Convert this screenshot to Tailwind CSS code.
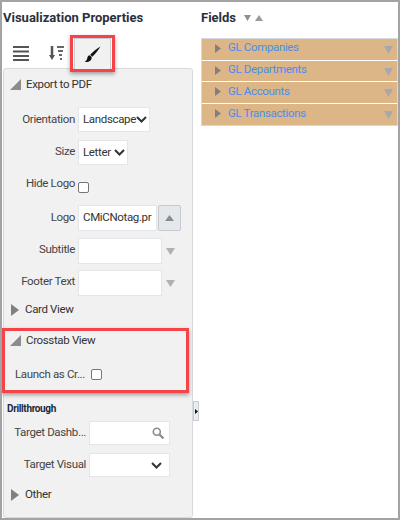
<!DOCTYPE html>
<html>
<head>
<meta charset="utf-8">
<script src="https://cdn.jsdelivr.net/npm/@tailwindcss/browser@4"></script>
</head>
<body class="bg-white">
<div class="relative w-[400px] h-[520px] overflow-hidden bg-white border-2 border-[#a3a3a3] text-[#333] text-[11.5px] font-['Roboto','Open_Sans',sans-serif] tracking-[-0.35px]">
  <div class="flex h-full">
    <!-- left pane -->
    <div class="w-[190px] shrink-0 ml-[1px]">
      <div class="h-[30px] pt-[7px] text-[13px] font-bold leading-[17px] tracking-[0px] text-[#2b3040] whitespace-nowrap">Visualization Properties</div>
      <div class="flex items-end h-[36px] pl-[5px]">
        <div class="w-[26px] h-[28px] flex items-center justify-center mb-[1px]">
          <svg width="16" height="15" viewBox="0 0 16 15"><path d="M0 1h16M0 5.500h16M0 10h16M0 14h16" stroke="#555" stroke-width="2"/></svg>
        </div>
        <div class="w-[22px] h-[28px] ml-[11px] flex items-center justify-center mb-[1px]">
          <svg width="15" height="15" viewBox="0 0 15 15"><path d="M3 0v10" stroke="#555" stroke-width="2.500"/><path d="M0 9h6l-3 5z" fill="#555"/><path d="M8 1h7M9 5h5M10 9h3M11 13h2" stroke="#666" stroke-width="2"/></svg>
        </div>
        <div class="w-[37px] h-[31px] ml-[7px] -mb-[1px] bg-[#f1f1f1] border border-b-0 border-[#c8ccd0] flex items-center justify-center relative z-10">
          <svg width="17" height="17" viewBox="0 0 16 16"><path d="M15.500 .5C12 2.500 8.500 5.500 5.800 8.300l2 1.900C10.500 7.500 13.500 4 15.500 .5z" fill="#111"/><path d="M5.300 8.800C3.300 9.300 3.300 11 2.800 12.500 2.500 13.500 1.500 14.500 .5 15c2.500.5 5-.3 6.200-2 .6-1 .7-2 .4-3z" fill="#111"/></svg>
        </div>
      </div>
      <div class="h-[450px] bg-[#f1f1f1] border border-[#d6dade] rounded-[3px] relative">
        <div class="flex items-center h-[17px] mt-[7px] pl-[6px]">
          <svg width="11" height="11" viewBox="0 0 11 11" class="mr-[5px]"><path d="M11 0v11H0z" fill="#8c8c8c"/></svg>
          <span>Export to PDF</span>
        </div>
        <div class="flex items-center mt-[14px] h-[25px]">
          <label class="w-[74px] text-right pr-[3px] text-[#444]">Orientation</label>
          <div class="w-[72px] h-[25px] bg-white border border-[#e2e6ea] flex items-center justify-between pl-[4px] pr-[2px]"><span>Landscape</span>
            <svg width="11" height="7" viewBox="0 0 11 7"><path d="M1 1l4.500 4.500L10 1" fill="none" stroke="#333" stroke-width="2"/></svg></div>
        </div>
        <div class="flex items-center mt-[8px] h-[25px]">
          <label class="w-[74px] text-right pr-[3px] pb-[2px] text-[#444]">Size</label>
          <div class="w-[50px] h-[25px] bg-white border border-[#e2e6ea] flex items-center justify-between pl-[4px] pr-[2px]"><span>Letter</span>
            <svg width="11" height="7" viewBox="0 0 11 7"><path d="M1 1l4.500 4.500L10 1" fill="none" stroke="#333" stroke-width="2"/></svg></div>
        </div>
        <div class="flex items-center mt-[8px] h-[25px]">
          <label class="w-[74px] text-right pr-[3px] pb-[3px] text-[#444]">Hide Logo</label>
          <div class="w-[11px] h-[11px] mt-[3px] bg-white border border-[#767676] rounded-[2px]"></div>
        </div>
        <div class="flex items-center mt-[7px] h-[26px]">
          <label class="w-[74px] text-right pr-[3px] text-[#444]">Logo</label>
          <div class="w-[79px] h-[26px] bg-white border border-[#e2e6ea] flex items-center pl-[4px] overflow-hidden whitespace-nowrap"><span>CMiCNotag.pr</span></div>
          <div class="w-[23px] h-[26px] ml-[1px] bg-[#e4e8ec] border border-[#c5cad0] rounded-[2px] flex items-center justify-center">
            <svg width="9" height="6" viewBox="0 0 9 6"><path d="M4.500 0L9 6H0z" fill="#8c8c8c"/></svg></div>
        </div>
        <div class="flex items-center mt-[7px] h-[26px]">
          <label class="w-[74px] text-right pr-[3px] pb-[2px] text-[#444]">Subtitle</label>
          <div class="w-[84px] h-[26px] bg-white border border-[#e2e6ea]"></div>
          <svg width="9" height="7" viewBox="0 0 9 7" class="ml-[4px]"><path d="M0 0h9L4.500 7z" fill="#aeb0b2"/></svg>
        </div>
        <div class="flex items-center mt-[6px] h-[26px]">
          <label class="w-[74px] text-right pr-[3px] pb-[2px] text-[#444]">Footer Text</label>
          <div class="w-[84px] h-[26px] bg-white border border-[#e2e6ea]"></div>
          <svg width="9" height="7" viewBox="0 0 9 7" class="ml-[4px]"><path d="M0 0h9L4.500 7z" fill="#aeb0b2"/></svg>
        </div>
        <div class="flex items-center h-[17px] mt-[5px] pl-[7px]">
          <svg width="8" height="12" viewBox="0 0 8 12" class="mr-[6px]"><path d="M0 0l8 6-8 6z" fill="#808080"/></svg>
          <span>Card View</span>
        </div>
        <div class="flex items-center h-[17px] mt-[14px] pl-[6px]">
          <svg width="11" height="11" viewBox="0 0 11 11" class="mr-[5px]"><path d="M11 0v11H0z" fill="#8c8c8c"/></svg>
          <span>Crosstab View</span>
        </div>
        <div class="flex items-center h-[17px] mt-[17px] pl-[11px]">
          <span class="w-[72px] text-[#444] whitespace-nowrap">Launch as Cr...</span>
          <div class="w-[11px] h-[11px] ml-[4px] bg-white border border-[#767676] rounded-[2px]"></div>
        </div>
        <div class="h-[14px] mt-[19px] pl-[3px] text-[10px] font-bold leading-[14px] text-[#222a3a]">Drillthrough</div>
        <div class="flex items-center mt-[5px] h-[24px]">
          <label class="w-[85px] text-right pr-[3px] text-[#444] whitespace-nowrap">Target Dashb...</label>
          <div class="w-[81px] h-[24px] bg-white border border-[#e2e6ea] flex items-center justify-end pr-[5px]">
            <svg width="12" height="12" viewBox="0 0 12 12"><circle cx="4.800" cy="4.800" r="3.500" fill="none" stroke="#8a8a8a" stroke-width="1.600"/><path d="M7.500 7.500L11.500 11.500" stroke="#8a8a8a" stroke-width="2.200"/></svg>
          </div>
        </div>
        <div class="flex items-center mt-[8px] h-[24px]">
          <label class="w-[85px] text-right pr-[3px] text-[#444] whitespace-nowrap">Target Visual</label>
          <div class="w-[81px] h-[24px] bg-white border border-[#e2e6ea] flex items-center justify-end pr-[7px]">
            <svg width="11" height="7" viewBox="0 0 11 7"><path d="M1 1l4.500 4.500L10 1" fill="none" stroke="#333" stroke-width="2"/></svg>
          </div>
        </div>
        <div class="flex items-center h-[17px] mt-[9px] pl-[7px]">
          <svg width="8" height="12" viewBox="0 0 8 12" class="mr-[6px]"><path d="M0 0l8 6-8 6z" fill="#808080"/></svg>
          <span>Other</span>
        </div>
      </div>
    </div>
    <!-- splitter -->
    <div class="w-[8px] shrink-0 pt-[399px]">
      <div class="w-[6px] h-[20px] bg-[#e9ecef] border border-[#c8ccd0] flex items-center justify-center">
        <svg width="3" height="5" viewBox="0 0 3 5"><path d="M0 0l3 2.500L0 5z" fill="#111"/></svg>
      </div>
    </div>
    <!-- right pane -->
    <div class="flex-1">
      <div class="flex items-center h-[36px] pb-[5px]">
        <span class="text-[13px] font-bold tracking-[0px] text-[#2b3040] mr-[8px]">Fields</span>
        <svg width="7" height="6" viewBox="0 0 7 6" class="mr-[4px]"><path d="M0 0h7L3.500 6z" fill="#8f8f8f"/></svg>
        <svg width="8" height="6" viewBox="0 0 8 6"><path d="M4 0l4 6H0z" fill="#9a9a9a"/></svg>
      </div>
      <div class="border border-[#d6dade] w-[197px]">
        <div class="h-[22px] pb-[3px] bg-[#dcb686] border-b border-white flex items-center pl-[13px] pr-[4px] text-[#4a8cf2]"><svg width="6" height="9" viewBox="0 0 6 9" class="mr-[7px]"><path d="M0 0l6 4.500L0 9z" fill="#808080"/></svg><span class="flex-1">GL Companies</span><svg width="9" height="8" viewBox="0 0 9 8" class="mt-[3px]"><path d="M0 0h9L4.500 8z" fill="#a8a8a8"/></svg></div>
        <div class="h-[21px] pb-[2px] bg-[#dcb686] border-b border-white flex items-center pl-[13px] pr-[4px] text-[#4a8cf2]"><svg width="6" height="9" viewBox="0 0 6 9" class="mr-[7px]"><path d="M0 0l6 4.500L0 9z" fill="#808080"/></svg><span class="flex-1">GL Departments</span><svg width="9" height="8" viewBox="0 0 9 8" class="mt-[3px]"><path d="M0 0h9L4.500 8z" fill="#a8a8a8"/></svg></div>
        <div class="h-[22px] pb-[2px] bg-[#dcb686] border-b border-white flex items-center pl-[13px] pr-[4px] text-[#4a8cf2]"><svg width="6" height="9" viewBox="0 0 6 9" class="mr-[7px]"><path d="M0 0l6 4.500L0 9z" fill="#808080"/></svg><span class="flex-1">GL Accounts</span><svg width="9" height="8" viewBox="0 0 9 8" class="mt-[3px]"><path d="M0 0h9L4.500 8z" fill="#a8a8a8"/></svg></div>
        <div class="h-[21px] pb-[2px] bg-[#dcb686] flex items-center pl-[13px] pr-[4px] text-[#4a8cf2]"><svg width="6" height="9" viewBox="0 0 6 9" class="mr-[7px]"><path d="M0 0l6 4.500L0 9z" fill="#808080"/></svg><span class="flex-1">GL Transactions</span><svg width="9" height="8" viewBox="0 0 9 8" class="mt-[3px]"><path d="M0 0h9L4.500 8z" fill="#a8a8a8"/></svg></div>
      </div>
    </div>
  </div>
  <!-- annotation highlights -->
  <div class="absolute left-[68px] top-[33px] w-[45px] h-[37px] border-[3px] border-[#f4444a] shadow-[0_2px_4px_rgba(0,0,0,0.35)]"></div>
  <div class="absolute left-[0px] top-[326px] w-[187px] h-[65px] border-[3px] border-[#f4444a] shadow-[0_2px_4px_rgba(0,0,0,0.35)]"></div>
</div>
</body>
</html>
